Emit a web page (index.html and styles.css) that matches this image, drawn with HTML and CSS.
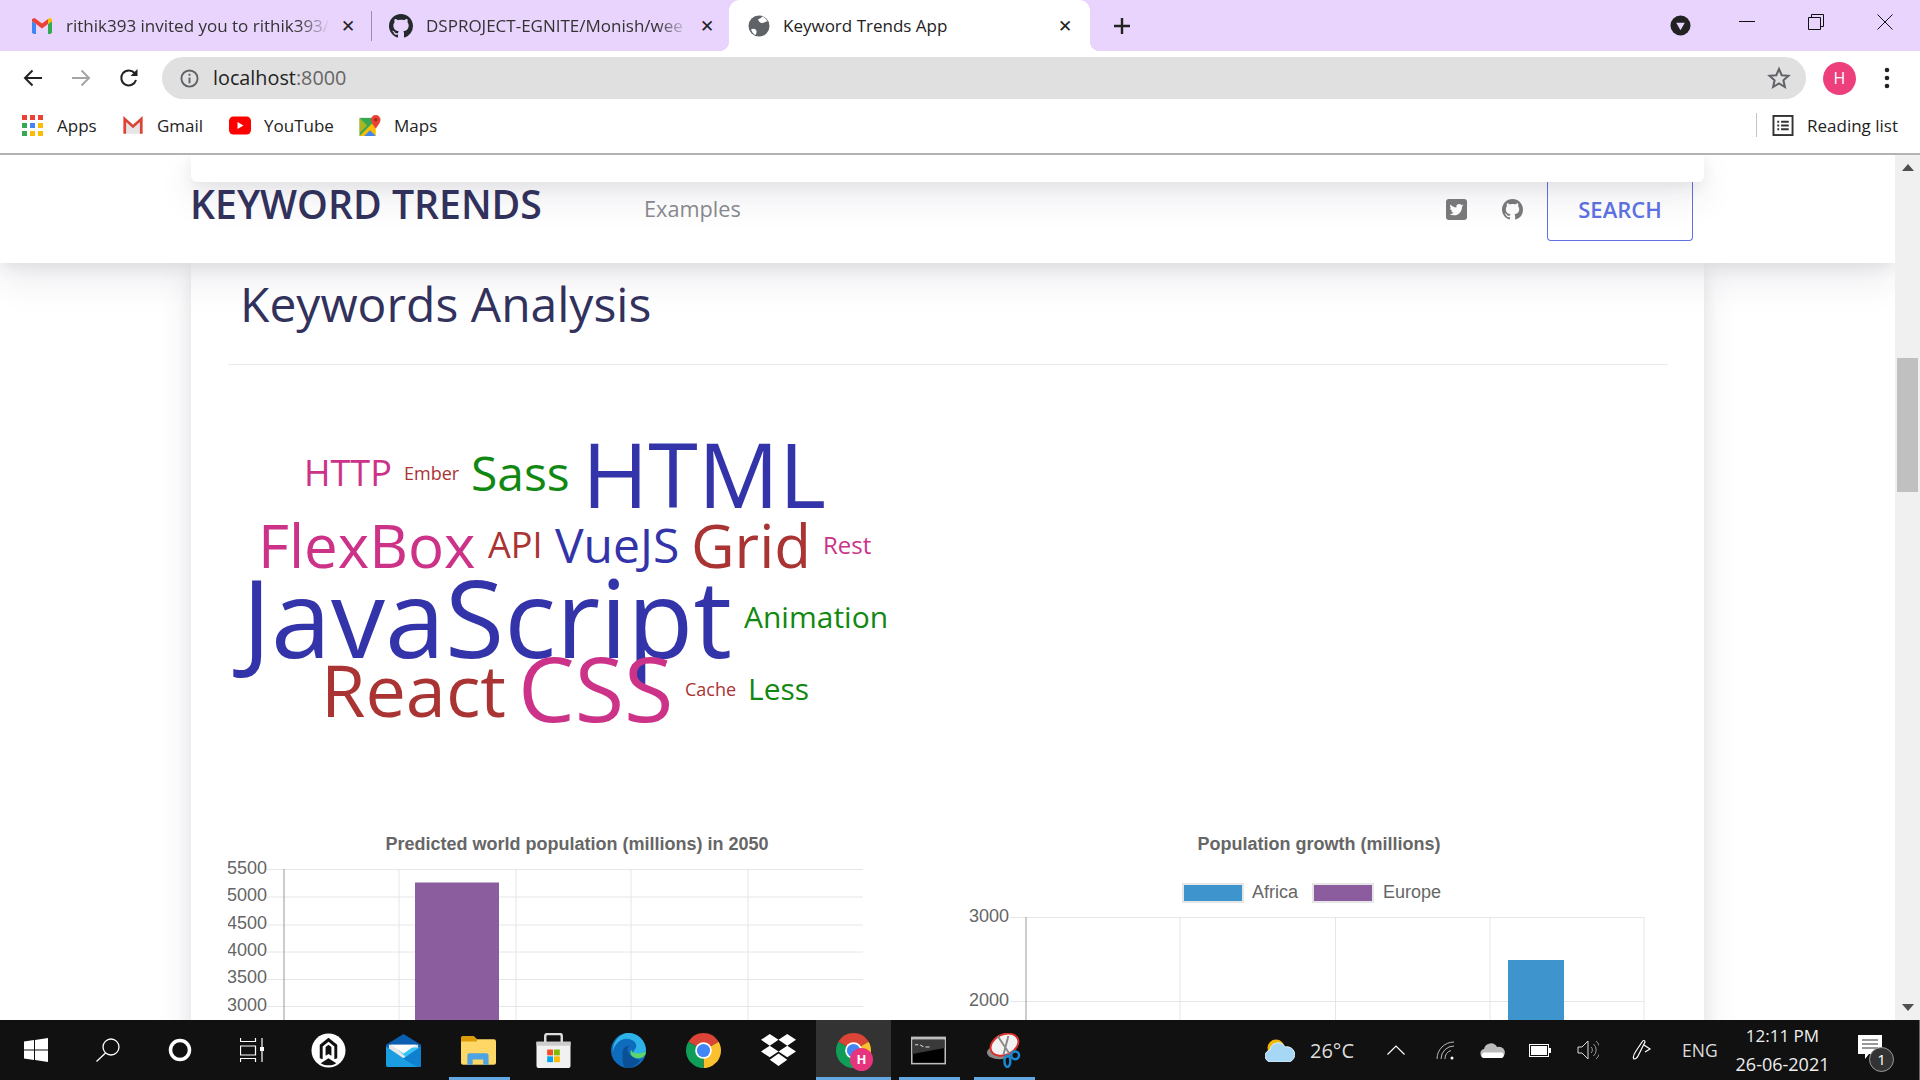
FILE: index.html
```html
<!DOCTYPE html>
<html lang="en">
<head>
<meta charset="UTF-8" />
<title>Keyword Trends App</title>
<link rel="stylesheet" href="styles.css">
</head>
<body>

<svg class="defs" width="0" height="0">
  <symbol id="octo" viewBox="0 0 16 16"><path d="M8 0C3.58 0 0 3.58 0 8c0 3.54 2.29 6.53 5.47 7.59.4.07.55-.17.55-.38 0-.19-.01-.82-.01-1.49-2.01.37-2.53-.49-2.69-.94-.09-.23-.48-.94-.82-1.13-.28-.15-.68-.52-.01-.53.63-.01 1.08.58 1.23.82.72 1.21 1.87.87 2.33.66.07-.52.28-.87.51-1.07-1.78-.2-3.64-.89-3.64-3.95 0-.87.31-1.59.82-2.15-.08-.2-.36-1.02.08-2.12 0 0 .67-.21 2.2.82.64-.18 1.32-.27 2-.27.68 0 1.36.09 2 .27 1.53-1.04 2.2-.82 2.2-.82.44 1.1.16 1.92.08 2.12.51.56.82 1.27.82 2.15 0 3.07-1.87 3.75-3.65 3.95.29.25.54.73.54 1.48 0 1.07-.01 1.93-.01 2.2 0 .21.15.46.55.38A8.013 8.013 0 0016 8c0-4.42-3.58-8-8-8z"/></symbol>
  <symbol id="chrome" viewBox="0 0 48 48">
    <path fill="#db4437" d="M24 24L6.68 14A20 20 0 0 1 41.32 14Z"/>
    <path fill="#fbc02d" d="M24 24L41.32 14A20 20 0 0 1 24 44Z"/>
    <path fill="#0f9d58" d="M24 24L24 44A20 20 0 0 1 6.68 14Z"/>
    <circle cx="24" cy="24" r="9.5" fill="#fff"/><circle cx="24" cy="24" r="7.5" fill="#4285f4"/>
  </symbol>
</svg>

<!-- tabs -->
<div class="tabbar">
  <div class="tab tab-first">
    <svg class="favicon" viewBox="0 0 24 24"><path fill="#4285f4" d="M2 7l4 3v10H3.5L2 18.5z"/><path fill="#34a853" d="M22 7l-4 3v10h2.5l1.5-1.5z"/><path fill="#ea4335" d="M6 10l6 4.5 6-4.5V5l-6 4.5L6 5zM2 7l4 3V5L4.5 4 2 5z"/><path fill="#fbbc04" d="M22 7l-4 3V5l1.5-1L22 5z"/></svg>
    <span class="tab-title">rithik393 invited you to rithik393/</span>
    <span class="tab-x">✕</span>
  </div>
  <div class="tab tab-second">
    <svg class="favicon" viewBox="0 0 16 16" fill="#24292e"><use href="#octo"/></svg>
    <span class="tab-title">DSPROJECT-EGNITE/Monish/wee</span>
    <span class="tab-x">✕</span>
  </div>
  <div class="tab tab-active">
    <svg class="favicon" viewBox="0 0 22 22"><circle cx="11" cy="11" r="10.5" fill="#5f6368"/><path fill="#fff" d="M3 14.5c2-1.5 5-.5 5.5 1.5.4 1.5-.5 3-1 4-2-.7-3.6-3-4.5-5.5zM10 4.5c2-1 3.5-1.5 4-3 2.5.8 4.5 2.5 5.5 5-2-.5-3 1-5 1.5-2 .3-3.5-1-4.5-3.5z"/></svg>
    <span class="tab-title">Keyword Trends App</span>
    <span class="tab-x">✕</span>
  </div>
  <svg class="newtab" viewBox="0 0 18 18"><path d="M9 1v16M1 9h16" stroke="#222" stroke-width="2.4"/></svg>
  <div class="winctl">
    <svg class="ctl-down" viewBox="0 0 22 22"><circle cx="11" cy="11" r="10.5" fill="#222"/><path d="M6.5 8h9L11 16z" fill="#e8d4fc"/></svg>
    <svg class="ctl" viewBox="0 0 16 16"><path d="M0 7.5h16" stroke="#111"/></svg>
    <svg class="ctl" viewBox="0 0 16 16" fill="none" stroke="#111"><path d="M.5 3.5h12v12H.5zM3.5 3.5V.5h12v12h-3"/></svg>
    <svg class="ctl" viewBox="0 0 16 16"><path d="M.5.5l15 15M15.5.5l-15 15" stroke="#111"/></svg>
  </div>
</div>

<!-- toolbar -->
<div class="toolbar">
  <svg class="tool" viewBox="0 0 20 20" fill="none" stroke="#222" stroke-width="2"><path d="M19 10H2M9.5 2.5L2 10l7.5 7.5"/></svg>
  <svg class="tool" viewBox="0 0 20 20" fill="none" stroke="#a5a5a5" stroke-width="2"><path d="M1 10h17M10.5 2.5L18 10l-7.5 7.5"/></svg>
  <svg class="tool" viewBox="0 0 20 20" fill="none"><path d="M17 12a7.5 7.5 0 1 1-1.5-7" stroke="#222" stroke-width="2"/><path d="M18.5 1v7h-7z" fill="#222"/></svg>
  <div class="omnibox">
    <svg class="info" viewBox="0 0 20 20" fill="none" stroke="#5f6368" stroke-width="2"><circle cx="10" cy="10" r="8.5"/><path d="M10 9v6M10 5v2"/></svg>
    <span class="url">localhost<span class="url-port">:8000</span></span>
    <svg class="star" viewBox="0 0 24 24" fill="none" stroke="#5f6368" stroke-width="2"><path d="M12 3l2.7 6.2 6.8.6-5.100 4.500 1.500 6.700L12 17.500 6.100 21l1.500-6.700L2.500 9.800l6.800-.6z"/></svg>
  </div>
  <div class="avatar">H</div>
  <svg class="kebab" viewBox="0 0 6 22" fill="#222"><circle cx="3" cy="3" r="2.3"/><circle cx="3" cy="11" r="2.3"/><circle cx="3" cy="19" r="2.3"/></svg>
</div>

<!-- bookmarks -->
<div class="bookmarks">
  <div class="bm bm-apps">
    <svg class="bm-icon" viewBox="0 0 21 21">
      <g fill="#ea4335"><rect width="5" height="5"/><rect x="8" width="5" height="5"/><rect x="16" width="5" height="5"/></g>
      <g><rect y="8" width="5" height="5" fill="#34a853"/><rect x="8" y="8" width="5" height="5" fill="#4285f4"/><rect x="16" y="8" width="5" height="5" fill="#fbbc04"/></g>
      <g><rect y="16" width="5" height="5" fill="#34a853"/><rect x="8" y="16" width="5" height="5" fill="#fbbc04"/><rect x="16" y="16" width="5" height="5" fill="#fbbc04"/></g>
    </svg>Apps
  </div>
  <div class="bm bm-gmail">
    <svg class="bm-icon bm-icon-wide" viewBox="0 0 24 20"><path d="M3 4h18v15H3z" fill="#e6e6e6"/><path d="M3 4l9 8 9-8z" fill="#fff"/><path d="M3 19V3l9 8 9-8v16" fill="none" stroke="#db4437" stroke-width="3"/></svg>Gmail
  </div>
  <div class="bm bm-yt">
    <svg class="bm-icon bm-icon-wide" viewBox="0 0 22 18"><rect width="22" height="18" rx="4.5" fill="#f00"/><path d="M8.5 5.5l6 3.5-6 3.5z" fill="#fff"/></svg>YouTube
  </div>
  <div class="bm bm-maps">
    <svg class="bm-icon bm-icon-wide" viewBox="0 0 22 22"><path d="M0 3h14v19H0z" fill="#34a853"/><path d="M0 22l14-14 3 3v11z" fill="#fbbc04"/><path d="M5 22l6-6 6 6z" fill="#4285f4"/><path d="M0 3l8 8-8 8z" fill="#fbbc04" opacity=".6"/><path d="M17 0a5 5 0 0 0-5 5c0 3.5 5 9 5 9s5-5.500 5-9a5 5 0 0 0-5-5z" fill="#ea4335"/><circle cx="17" cy="5" r="1.8" fill="#a52714"/></svg>Maps
  </div>
  <div class="bm-right">
    <svg class="bm-icon bm-icon-wide" viewBox="0 0 22 22" fill="none" stroke="#333" stroke-width="2"><rect x="1" y="1" width="20" height="20"/><path d="M5 7h2M9 7h8M5 11h2M9 11h8M5 15h2M9 15h8"/></svg>Reading list
  </div>
</div>

<!-- page -->
<div class="viewport">
  <div class="page">
    <nav class="nav">
      <div class="nav-cap"></div>
      <div class="nav-row">
        <span class="brand">KEYWORD TRENDS</span>
        <span class="nav-link">Examples</span>
        <svg class="nav-twitter" viewBox="0 0 21 21"><rect width="21" height="21" rx="3" fill="#7b7b7b"/><g transform="translate(3.5 3.7) scale(.58)"><path fill="#fff" d="M23.953 4.57a10 10 0 01-2.825.775 4.958 4.958 0 002.163-2.723c-.951.555-2.005.959-3.127 1.184a4.92 4.92 0 00-8.384 4.482C7.69 8.095 4.067 6.13 1.64 3.162a4.822 4.822 0 00-.666 2.475c0 1.71.87 3.213 2.188 4.096a4.904 4.904 0 01-2.228-.616v.06a4.923 4.923 0 003.946 4.827 4.996 4.996 0 01-2.212.085 4.936 4.936 0 004.604 3.417 9.867 9.867 0 01-6.102 2.105c-.39 0-.779-.023-1.17-.067a13.995 13.995 0 007.557 2.209c9.053 0 13.998-7.496 13.998-13.985 0-.21 0-.42-.015-.63A9.935 9.935 0 0024 4.59z"/></g></svg>
        <svg class="nav-github" viewBox="0 0 16 16" fill="#7b7b7b"><use href="#octo"/></svg>
        <span class="search-btn">SEARCH</span>
      </div>
    </nav>

    <main class="card">
      <h1 class="card-title">Keywords Analysis</h1>
      <hr class="divider">

      <svg class="cloud" viewBox="228 365 720 455" width="720" height="455">
        <text class="w-pink" x="304" y="486" font-size="36">HTTP</text>
        <text class="w-red" x="404" y="480" font-size="18">Ember</text>
        <text class="w-green" x="471" y="491" font-size="48">Sass</text>
        <text class="w-blue" x="582" y="508" font-size="90">HTML</text>
        <text class="w-pink" x="258" y="568" font-size="60">FlexBox</text>
        <text class="w-red" x="488" y="558" font-size="36">API</text>
        <text class="w-blue" x="555" y="563" font-size="48">VueJS</text>
        <text class="w-red" x="691" y="568" font-size="60">Grid</text>
        <text class="w-pink" x="823" y="554" font-size="24">Rest</text>
        <text class="w-blue" x="242" y="658" font-size="108">JavaScript</text>
        <text class="w-green" x="744" y="628" font-size="30">Animation</text>
        <text class="w-red" x="321" y="717" font-size="72">React</text>
        <text class="w-pink" x="518" y="722" font-size="90">CSS</text>
        <text class="w-red" x="685" y="696" font-size="18">Cache</text>
        <text class="w-green" x="748" y="700" font-size="30">Less</text>
      </svg>

      <div class="charts">
        <svg class="chart chart-left" viewBox="228 820 650 200" width="650" height="200">
          <text class="chart-title" x="577" y="850">Predicted world population (millions) in 2050</text>
          <g class="grid">
            <path d="M267 869.5H863M267 897H863M267 925H863M267 952H863M267 979.5H863M267 1006.5H863"/>
            <path d="M399 869V1020M516 869V1020M631 869V1020M748 869V1020"/>
          </g>
          <path class="axis" d="M284 869V1020"/>
          <g class="tick">
            <text x="267" y="874">5500</text><text x="267" y="901">5000</text><text x="267" y="929">4500</text>
            <text x="267" y="956">4000</text><text x="267" y="983">3500</text><text x="267" y="1011">3000</text>
          </g>
          <rect class="bar-purple" x="415" y="882.5" width="84" height="140"/>
        </svg>

        <svg class="chart chart-right" viewBox="948 820 720 200" width="720" height="200">
          <text class="chart-title" x="1319" y="850">Population growth (millions)</text>
          <rect class="legend-africa" x="1183" y="884" width="60" height="18"/>
          <text class="legend-text" x="1252" y="898">Africa</text>
          <rect class="legend-europe" x="1313" y="884" width="60" height="18"/>
          <text class="legend-text" x="1383" y="898">Europe</text>
          <g class="grid">
            <path d="M1010 917.5H1644M1010 1001.5H1644"/>
            <path d="M1180 917V1020M1335.5 917V1020M1490 917V1020M1644 917V1020"/>
          </g>
          <path class="axis" d="M1026 917V1020"/>
          <g class="tick">
            <text x="1009" y="922">3000</text><text x="1009" y="1006">2000</text>
          </g>
          <rect class="bar-blue" x="1508" y="960" width="56" height="62"/>
        </svg>
      </div>
    </main>
  </div>

  <div class="scrollbar">
    <span class="arrow-up"></span>
    <span class="thumb"></span>
    <span class="arrow-down"></span>
  </div>
</div>

<!-- taskbar -->
<div class="taskbar">
  <div class="sys">
    <svg class="sys-icon" viewBox="0 0 24 24" fill="#fff"><path d="M0 3.4L10 2v9.5H0zM11 1.900L24 0v11.500H11zM0 12.500h10V22L0 20.600zM11 12.500h13V24l-13-1.900z"/></svg>
    <svg class="sys-icon" viewBox="0 0 24 24" fill="none" stroke="#fff" stroke-width="1.3"><circle cx="15" cy="9" r="8"/><path d="M9.5 15L.5 23.5"/></svg>
    <svg class="sys-icon" viewBox="0 0 24 24" fill="none" stroke="#fff" stroke-width="3.5"><circle cx="12" cy="12" r="9.5"/></svg>
    <svg class="sys-icon" viewBox="0 0 24 24" fill="none" stroke="#fff" stroke-width="1.2"><path d="M.5 0v3.5h15V0M.5 8h15v9H.5zM.5 24v-3.500h15V24M22 0v24"/><rect x="20" y="9" width="4" height="4" fill="#fff" stroke="none"/></svg>
  </div>

  <div class="app"><svg class="app-icon" viewBox="0 0 36 36"><circle cx="18" cy="18" r="17.5" fill="#fff"/><path d="M18 5l-9 7v14l3 1V14l6-5 6 5v13l3-1V12zM18 26l-8 5c5 3 11 3 16 0z" fill="#111"/><path d="M18 12l-3 2.5v9l3-2 3 2v-9z" fill="#111"/></svg></div>
  <div class="app"><svg class="app-icon" viewBox="0 0 36 34"><path d="M0 11L18 0l18 11v21a2 2 0 0 1-2 2H2a2 2 0 0 1-2-2z" fill="#0a5fb0"/><path d="M3 11h30v8L18 25 3 19z" fill="#e8e8e8"/><path d="M36 11v21a2 2 0 0 1-2 2h-3L10 14h26z" fill="#38c3f4"/><path d="M0 13l18 12 14 9H2a2 2 0 0 1-2-2z" fill="#1b9de2"/><path d="M36 13L18 25l14 9h2a2 2 0 0 0 2-2z" fill="#0f7fd0"/><path d="M5 11h26L18 20z" fill="#fff"/></svg></div>
  <div class="app app-open"><svg class="app-icon" viewBox="0 0 33 27"><path d="M0 2a2 2 0 0 1 2-2h10l3 3h16a2 2 0 0 1 2 2v20a2 2 0 0 1-2 2H2a2 2 0 0 1-2-2z" fill="#ffd766"/><path d="M0 2a2 2 0 0 1 2-2h10l3 3v2H0z" fill="#dc9c08"/><path d="M6 27V18a2 2 0 0 1 2-2h16a2 2 0 0 1 2 2v9h-5v-5h-10v5z" fill="#4da3e4"/></svg></div>
  <div class="app"><svg class="app-icon" viewBox="0 0 35 36"><path d="M9 10V3a2 2 0 0 1 2-2h13a2 2 0 0 1 2 2v7" fill="none" stroke="#ddd" stroke-width="2.5"/><path d="M0 9h35v25a2 2 0 0 1-2 2H2a2 2 0 0 1-2-2z" fill="#f1f1f1"/><path d="M0 9h35v4H0z" fill="#ccc"/><rect x="11" y="17" width="6" height="6" fill="#f25022"/><rect x="18" y="17" width="6" height="6" fill="#7fba00"/><rect x="11" y="24" width="6" height="6" fill="#00a4ef"/><rect x="18" y="24" width="6" height="6" fill="#ffb900"/></svg></div>
  <div class="app"><svg class="app-icon" viewBox="0 0 36 36"><circle cx="18" cy="18" r="18" fill="#0f6cbd"/><path d="M2 20C1 8 10 0 18 0c9 0 17 7 18 17 0 4-4 6-8 6-3 0-5-1-5-3 0-3 3-3 3-7 0-3-4-7-10-7C9 6 3 12 2 20z" fill="#2db3e8"/><path d="M36 19c0 4-3 7-8 7-5 0-8-3-8-6 0-1 .5-2 1-3 0 3 3 4 6 4 4 0 8-1 9-2z" fill="#5fd66a"/><path d="M12 20c0-5 4-7 7-7-2 2-3 4-1 7 2 4 7 7 12 8-3 5-8 8-13 8-6 0-5-11-5-16z" fill="#0b4f96"/></svg></div>
  <div class="app"><svg class="app-icon" viewBox="4 4 40 40"><use href="#chrome" width="48" height="48"/></svg></div>
  <div class="app"><svg class="app-icon" viewBox="0 0 36 34" fill="#fff"><path d="M9 0l9 6-9 6-9-6zM27 0l9 6-9 6-9-6zM9 12l9 6-9 6-9-6zM27 12l9 6-9 6-9-6zM18 20l9 6.500-9 6.500-9-6.500z"/></svg></div>
  <div class="app app-active">
    <svg class="app-icon" viewBox="4 4 40 40"><use href="#chrome" width="48" height="48"/></svg>
    <span class="app-badge">H</span>
  </div>
  <div class="app app-open"><svg class="app-icon" viewBox="0 0 34 27"><rect width="34" height="27" fill="#bdbdbd"/><rect x="1.5" y="3" width="31" height="22.5" fill="#000"/><path d="M1.5 3h31v8L1.5 17z" fill="#3a3a3a"/><path d="M4 8h3M9 8l3 2M14 10h4" stroke="#ddd"/></svg></div>
  <div class="app app-open"><svg class="app-icon" viewBox="0 0 34 36"><ellipse cx="13" cy="20" rx="13" ry="7" fill="#8a8a8a"/><ellipse cx="18" cy="12" rx="15" ry="10.500" fill="#f2f2f2" stroke="#d9302c" stroke-width="2" transform="rotate(-25 18 12)"/><path d="M11 3l12 18M22 3l-5 19" stroke="#8a8a8a" stroke-width="2"/><circle cx="29" cy="23" r="4" fill="none" stroke="#1889d4" stroke-width="2.5"/><ellipse cx="21" cy="29" rx="3" ry="6" fill="none" stroke="#1889d4" stroke-width="2.5"/></svg></div>

  <div class="tray">
    <svg class="tray-weather" viewBox="0 0 30 23"><circle cx="11" cy="9" r="8.5" fill="#f2b705"/><path d="M6 23a6 6 0 0 1-1-11.900A8 8 0 0 1 20 8a7.500 7.500 0 0 1 4 15z" fill="#a6d8f5" stroke="#dff1fb"/></svg>
    <span class="tray-temp">26°C</span>
    <svg class="tray-caret" viewBox="0 0 18 10" fill="none" stroke="#fff" stroke-width="1.2"><path d="M.5 9.5L9 1l8.500 8.500"/></svg>
    <svg class="tray-wifi" viewBox="0 0 19 19" fill="none" stroke="#bbb"><path d="M1 18A17 17 0 0 1 18 1M5 18A13 13 0 0 1 18 5M9 18a9 9 0 0 1 6-8.500"/><circle cx="16" cy="17" r="1.5" fill="#fff" stroke="none"/></svg>
    <svg class="tray-drive" viewBox="0 0 25 16"><path d="M5 16a4.500 4.500 0 0 1-1-8.900A7 7 0 0 1 17 5a5.500 5.500 0 0 1 4 11z" fill="#bbb"/><path d="M3 16a3 3 0 0 1 1-5.500h18a3 3 0 0 1 0 5.500z" fill="#fff"/></svg>
    <svg class="tray-battery" viewBox="0 0 22 13"><rect x=".5" y=".5" width="19" height="12" fill="#111" stroke="#fff"/><rect x="2" y="2" width="16" height="9" fill="#fff"/><rect x="20" y="4" width="2" height="5" fill="#fff"/></svg>
    <svg class="tray-speaker" viewBox="0 0 22 22" fill="none" stroke="#ddd"><path d="M1 8h4l6-6v18l-6-6H1z"/><path d="M14 8a4 4 0 0 1 0 6M16.500 5a8 8 0 0 1 0 12M19 2a12 12 0 0 1 0 18" stroke="#999"/></svg>
    <svg class="tray-pen" viewBox="0 0 20 22" fill="none" stroke="#fff" stroke-width="1.2"><path d="M2 20c-2-2 0-5 2-8l6-9c1-2 3-2 3 0l-7 14c-1 2-2 3-4 3zM12 6l6 4-5 3"/></svg>
    <span class="tray-lang">ENG</span>
    <div class="clock"><span class="clock-time">12:11 PM</span><span class="clock-date">26-06-2021</span></div>
    <div class="notif">
      <svg class="notif-icon" viewBox="0 0 24 24"><path d="M0 0h24v19H11l-4 5v-5H0z" fill="#fff"/><path d="M4 5h16M4 9h16M4 13h16" stroke="#333"/></svg>
      <span class="notif-badge">1</span>
    </div>
  </div>
</div>

</body>
</html>
```

FILE: styles.css
```css
* { box-sizing: border-box; }
html, body { margin: 0; height: 100%; overflow: hidden; }
body { width: 1920px; height: 1080px; font-family: "Open Sans", "Liberation Sans", sans-serif; color: #222; background: #fff; display: flex; flex-direction: column; }
.defs { position: absolute; }
svg { display: block; flex: none; }

/* tabs */
.tabbar { height: 51px; background: #e8d4fc; display: flex; align-items: center; flex: none; }
.tab { height: 51px; display: flex; align-items: center; font-size: 17px; color: #333; position: relative; }
.tab-first { width: 372px; padding-left: 30px; }
.tab-first::after { content: ""; position: absolute; right: 0; top: 11px; height: 30px; width: 1px; background: #9a8fa6; }
.tab-second { width: 357px; padding-left: 17px; }
.tab-active { width: 361px; padding-left: 19px; background: #fff; border-radius: 11px 11px 0 0; color: #222; }
.tab-active::before, .tab-active::after { content: ""; position: absolute; bottom: 0; width: 10px; height: 10px; }
.tab-active::before { left: -10px; background: radial-gradient(circle at 0 0, transparent 10px, #fff 10.5px); }
.tab-active::after { right: -10px; background: radial-gradient(circle at 100% 0, transparent 10px, #fff 10.5px); }
.favicon { width: 22px; height: 24px; margin-right: 13px; }
.tab-first .favicon { width: 24px; margin-right: 12px; }
.tab-second .favicon { width: 24px; }
.tab-title { white-space: nowrap; overflow: hidden; -webkit-mask-image: linear-gradient(to right, #000 88%, transparent); mask-image: linear-gradient(to right, #000 88%, transparent); }
.tab-first .tab-title { width: 264px; }
.tab-second .tab-title { width: 263px; }
.tab-active .tab-title { -webkit-mask-image: none; mask-image: none; width: 264px; }
.tab-x { font-size: 17px; font-weight: 700; color: #222; width: 24px; text-align: center; margin-left: 6px; font-family: "DejaVu Sans", sans-serif; }
.newtab { width: 18px; height: 18px; margin-left: 23px; }
.winctl { margin-left: auto; display: flex; align-items: center; height: 51px; padding-right: 27px; }
.ctl-down { width: 21px; height: 21px; margin-right: 48px; }
.ctl { width: 16px; height: 16px; margin-left: 53px; margin-top: -8px; }
.ctl:nth-child(2) { margin-left: 0; }

/* toolbar */
.toolbar { height: 48px; padding-left: 23px; display: flex; align-items: flex-end; flex: none; }
.tool { width: 20px; height: 20px; margin: 0 28px 11px 0; }
.tool:nth-child(3) { margin-right: 23px; }
.omnibox { width: 1644px; height: 42px; background: #e0e0e0; border-radius: 21px; display: flex; align-items: center; padding: 0 15px 0 18px; }
.info { width: 19px; height: 19px; margin-right: 14px; }
.url { font-size: 19.8px; color: #222; margin-top: -1px; }
.url-port { color: #666; }
.star { width: 24px; height: 24px; margin-left: auto; }
.avatar { width: 33px; height: 33px; border-radius: 50%; background: #ee3f7d; color: #fff; font-size: 16px; line-height: 33px; text-align: center; margin: 0 0 4px 17px; }
.kebab { width: 6px; height: 22px; margin: 0 0 10px 28px; }

/* bookmarks */
.bookmarks { height: 56px; padding: 0 22px 2px 22px; border-bottom: 2px solid #b3b3b3; display: flex; align-items: center; font-size: 17px; color: #222; flex: none; }
.bm { display: flex; align-items: center; }
.bm-icon { width: 21px; height: 21px; margin-right: 14px; }
.bm-icon-wide { width: 22px; margin-right: 13px; }
.bm-apps { width: 100px; }
.bm-gmail { width: 107px; }
.bm-yt { width: 130px; }
.bm-right { margin-left: auto; display: flex; align-items: center; border-left: 1px solid #c4c4c4; height: 24px; padding-left: 15px; }

/* page */
.viewport { height: 865px; display: flex; flex: none; }
.page { width: 1895px; overflow: hidden; background: #fff; }
.nav { height: 108px; background: #fff; position: relative; z-index: 2; box-shadow: 0 15px 35px rgba(50,50,93,.1), 0 5px 15px rgba(0,0,0,.07); }
.nav-cap { width: 1513px; height: 27px; margin-left: 191px; background: #fff; border-radius: 0 0 6px 6px; position: relative; z-index: 1; box-shadow: 0 15px 35px rgba(50,50,93,.1), 0 5px 15px rgba(0,0,0,.07); }
.nav-row { margin-left: 190px; width: 1503px; display: flex; align-items: flex-start; }
.brand { font-size: 39.2px; font-weight: 600; color: #32325d; line-height: 44px; width: 454px; white-space: nowrap; }
.nav-link { font-size: 21.7px; color: #8a8a8f; line-height: 30px; margin-top: 12px; }
.nav-twitter { width: 21px; height: 21px; margin: 17px 0 0 auto; }
.nav-github { width: 21px; height: 21px; margin: 17px 24px 0 35px; }
.search-btn { width: 146px; height: 59px; border: 1px solid #5e72e4; border-top: 0; border-radius: 0 0 4px 4px; color: #5e72e4; font-size: 22px; font-weight: 600; text-align: center; line-height: 54px; }

.card { width: 1513px; height: 790px; margin-left: 191px; padding: 0 36px 0 37px; background: #fff; box-shadow: 0 15px 35px rgba(50,50,93,.1), 0 5px 15px rgba(0,0,0,.07); }
.card-title { margin: 0; padding: 0 0 0 12px; font-size: 48px; font-weight: 400; color: #32325d; height: 101px; line-height: 81px; }
.divider { margin: 0; border: 0; border-top: 1px solid #e9e9ec; height: 1px; }
.cloud text { font-family: "Open Sans", sans-serif; }
.w-blue { fill: #3333aa; }
.w-pink { fill: #cc3388; }
.w-red { fill: #aa3333; }
.w-green { fill: #118811; }

.charts { display: flex; gap: 70px; }
.chart text { font-family: "Liberation Sans", Arial, sans-serif; }
.chart-title { font-size: 18px; font-weight: 700; fill: #666; text-anchor: middle; }
.tick text { font-size: 18px; fill: #666; text-anchor: end; }
.legend-text { font-size: 18px; fill: #666; }
.grid path { stroke: #e6e6e6; fill: none; }
.axis { stroke: #999; fill: none; }
.bar-purple { fill: #8b5c9e; }
.bar-blue { fill: #3e95cd; }
.legend-africa { fill: #3e95cd; stroke: #e6e6e6; stroke-width: 2; }
.legend-europe { fill: #8b5c9e; stroke: #e6e6e6; stroke-width: 2; }

/* scrollbar */
.scrollbar { width: 25px; background: #f0f0f0; display: flex; flex-direction: column; align-items: center; padding: 9px 0; }
.arrow-up, .arrow-down { width: 0; height: 0; border-left: 6px solid transparent; border-right: 6px solid transparent; }
.arrow-up { border-bottom: 7px solid #505050; }
.arrow-down { border-top: 7px solid #505050; margin-top: auto; }
.thumb { width: 21px; height: 134px; background: #c0c0c0; margin-top: 187px; }

/* taskbar */
.taskbar { height: 60px; background: #111; display: flex; align-items: center; flex: none; border-right: 1px solid #666; }
.sys { width: 291px; display: flex; padding-left: 24px; gap: 48px; }
.sys-icon { width: 24px; height: 24px; }
.app { width: 75px; height: 60px; display: flex; align-items: center; justify-content: center; position: relative; }
.app-icon { width: 35px; height: 35px; }
.app-open::after { content: ""; position: absolute; left: 8px; right: 6px; bottom: 0; height: 3px; background: #63a8e0; }
.app-active { background: #333; }
.app-active::after { content: ""; position: absolute; left: 0; right: 0; bottom: 0; height: 3px; background: #63a8e0; }
.app-badge { position: absolute; left: 34px; top: 28px; width: 23px; height: 23px; border-radius: 50%; background: #e8347c; color: #fff; font-size: 13px; font-weight: 700; line-height: 23px; text-align: center; }

.tray { margin-left: auto; width: 654px; height: 60px; display: grid; grid-template-columns: 46px 76px 49px 44px 49px 48px 55px 51px 53.5px 121.5px 61px; align-items: center; justify-items: start; color: #eee; }
.tray-temp { font-size: 20px; color: #ddd; margin-left: -1px; }
.tray-lang { font-size: 17.5px; color: #ddd; margin-left: -1px; }
.tray-weather { width: 30px; height: 23px; }
.tray-caret { width: 18px; height: 10px; }
.tray-wifi { width: 19px; height: 19px; }
.tray-drive { width: 25px; height: 16px; }
.tray-battery { width: 22px; height: 13px; }
.tray-speaker { width: 22px; height: 22px; }
.tray-pen { width: 20px; height: 22px; }
.clock { width: 92px; display: flex; flex-direction: column; align-items: center; line-height: 28px; color: #eee; white-space: nowrap; }
.clock-time { font-size: 17px; }
.clock-date { font-size: 18px; }
.notif { position: relative; width: 24px; height: 24px; margin-top: -6px; }
.notif-icon { width: 24px; height: 24px; }
.notif-badge { position: absolute; left: 11px; top: 12px; width: 25px; height: 25px; border-radius: 50%; background: #333; border: 1px solid #999; color: #fff; font-size: 15px; line-height: 23px; text-align: center; }
```
